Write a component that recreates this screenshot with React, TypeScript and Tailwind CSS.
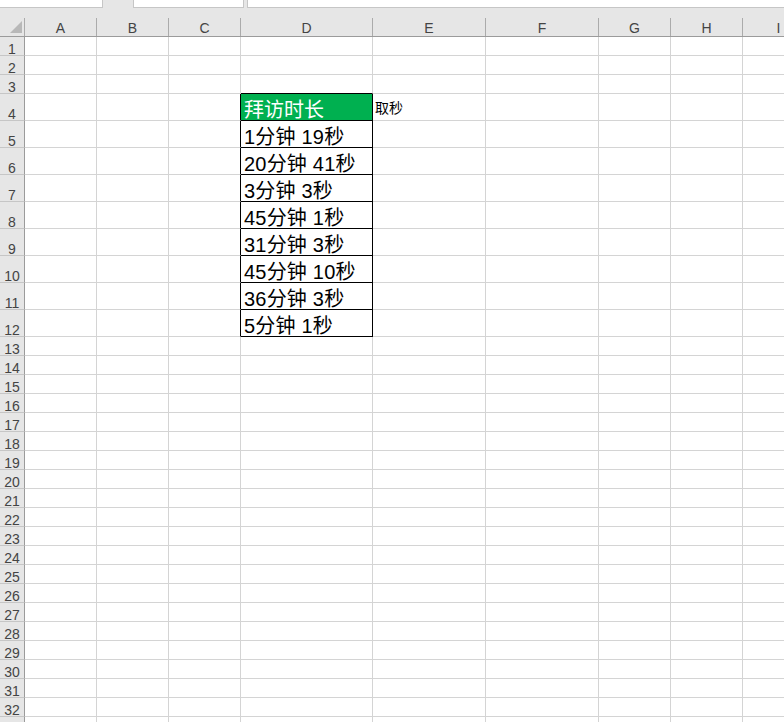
import React from 'react';

const COLS = ['A', 'B', 'C', 'D', 'E', 'F', 'G', 'H', 'I'];

const durations: Record<number, string> = {
  5: '1分钟 19秒',
  6: '20分钟 41秒',
  7: '3分钟 3秒',
  8: '45分钟 1秒',
  9: '31分钟 3秒',
  10: '45分钟 10秒',
  11: '36分钟 3秒',
  12: '5分钟 1秒',
};

const font = 'font-["Liberation_Sans","Noto_Sans_CJK_SC",sans-serif]';
const grid = 'grid grid-cols-[25px_72px_72px_72px_132px_113px_113px_72px_72px_72px]';

function Cell({ row, col }: { row: number; col: string }) {
  const inTable = row >= 4 && row <= 12;
  let border = 'border-r border-b border-[#d4d4d4]';
  if (col === 'D' && inTable) border = 'border-r border-b border-black';
  else if (col === 'D' && row === 3) border = 'border-r border-b border-r-[#d4d4d4] border-b-black';
  else if (col === 'C' && inTable) border = 'border-r border-b border-r-black border-b-[#d4d4d4]';

  if (col === 'D' && row === 4) {
    return (
      <div className={`${border} bg-[#00b050] flex items-end pl-[3px] text-white text-[20px] leading-[20px] whitespace-nowrap`}>
        拜访时长
      </div>
    );
  }
  if (col === 'D' && durations[row]) {
    return (
      <div className={`${border} flex items-end pl-[3px] text-black text-[20px] leading-[20px] tracking-[0.2px] whitespace-nowrap`}>
        {durations[row]}
      </div>
    );
  }
  if (col === 'E' && row === 4) {
    return (
      <div className={`${border} flex items-end pl-[2px] pb-[4px] text-black text-[14px] leading-[15px] whitespace-nowrap`}>
        取秒
      </div>
    );
  }
  return <div className={border} />;
}

export default function App() {
  // row 33 only peeks in at the bottom edge, its number stays hidden
  const rows = Array.from({ length: 33 }, (_, i) => i + 1);

  return (
    <div className={`w-[784px] h-[722px] overflow-hidden bg-white ${font}`}>
      <div className="flex h-[18px] bg-[#e6e6e6]">
        <div className="w-[103px] h-[8px] bg-white border-r border-b border-[#c6c6c6]" />
        <div className="ml-[30px] w-[111px] h-[8px] bg-white border-x border-b border-[#c6c6c6]" />
        <div className="ml-[3px] flex-1 h-[8px] bg-white border-l border-b border-[#c6c6c6]" />
      </div>

      <div className={`${grid} h-[19px] bg-[#e6e6e6] border-b border-[#9b9b9b]`}>
        <div className="relative border-r border-[#ababab]">
          <svg className="absolute left-0 top-0" width="24" height="18" viewBox="0 0 24 18">
            <polygon points="10,15 22,15 22,3" fill="#b8b8b8" />
          </svg>
        </div>
        {COLS.map(c => (
          <div
            key={c}
            className="flex items-end justify-center border-r border-[#ababab] text-[14px] leading-[14px] text-[#444] pb-[1px]"
          >
            {c}
          </div>
        ))}
      </div>

      {rows.map(r => (
        <div key={r} className={`${grid} ${r >= 4 && r <= 12 ? 'h-[27px]' : 'h-[19px]'}`}>
          <div className="flex items-end justify-center bg-[#e6e6e6] border-r border-b border-r-[#9b9b9b] border-b-[#c6c6c6] text-[14px] leading-[12px] text-[#444]">
            {r < 33 ? r : ''}
          </div>
          {COLS.map(c => (
            <Cell key={c} row={r} col={c} />
          ))}
        </div>
      ))}
    </div>
  );
}
